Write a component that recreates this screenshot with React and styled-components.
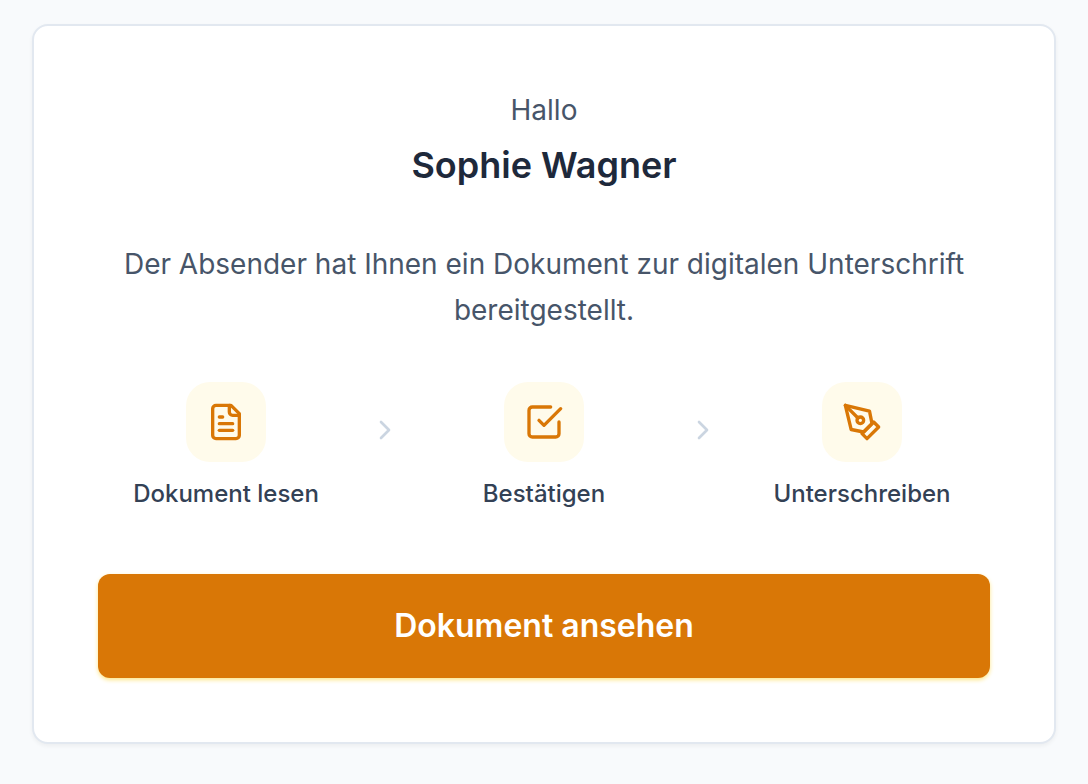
import React from "react";
import styled, { createGlobalStyle } from "styled-components";

const GlobalStyle = createGlobalStyle`
  * {
    box-sizing: border-box;
  }

  body {
    margin: 0;
    background: #f8fafc;
    font-family: Inter, "Liberation Sans", sans-serif;
  }
`;

const Page = styled.main`
  padding: 24px 32px 40px;
`;

const Card = styled.section`
  padding: 64px;
  background: #ffffff;
  border: 2px solid #e2e8f0;
  border-radius: 16px;
  box-shadow: 0 2px 4px rgba(0, 0, 0, 0.05);
  text-align: center;
`;

const Greeting = styled.p`
  margin: 0 0 8px;
  color: #475569;
  font-size: 28px;
  line-height: 40px;
`;

const Name = styled.h1`
  margin: 0 0 49px;
  color: #1e293b;
  font-size: 36px;
  font-weight: 600;
  line-height: 54px;
`;

const Message = styled.p`
  margin: 0 0 49px;
  color: #475569;
  font-size: 28px;
  line-height: 46px;
`;

const Steps = styled.div`
  display: flex;
  align-items: flex-start;
  margin-bottom: 64px;
`;

const Step = styled.div`
  flex: 1;
  display: flex;
  flex-direction: column;
  align-items: center;
  gap: 16px;
`;

const IconBox = styled.div`
  display: flex;
  align-items: center;
  justify-content: center;
  width: 80px;
  height: 80px;
  color: #d97706;
  background: #fffbeb;
  border-radius: 24px;
`;

const StepLabel = styled.span`
  color: #334155;
  font-size: 24px;
  font-weight: 500;
  line-height: 32px;
`;

const Separator = styled.div`
  display: flex;
  justify-content: center;
  width: 62px;
  padding-top: 32px;
  color: #cbd5e1;
`;

const Icon = styled.svg.attrs({
  viewBox: "0 0 24 24",
  fill: "none",
  stroke: "currentColor",
  strokeWidth: 2,
  strokeLinecap: "round",
  strokeLinejoin: "round",
  "aria-hidden": true,
})`
  display: block;
  width: ${(props) => props.$size}px;
  height: ${(props) => props.$size}px;
`;

const ViewButton = styled.button`
  display: block;
  width: 100%;
  padding: 28px 32px;
  color: #ffffff;
  background: #d97706;
  border: 0;
  border-radius: 12px;
  box-shadow: 0 2px 4px #fde68a;
  font-family: inherit;
  font-size: 32px;
  font-weight: 600;
  line-height: 48px;
  cursor: pointer;

  &:hover {
    background: #b45309;
  }
`;

const FileIcon = () => (
  <Icon $size={40}>
    <path d="M15 2H6a2 2 0 0 0-2 2v16a2 2 0 0 0 2 2h12a2 2 0 0 0 2-2V7Z" />
    <path d="M14 2v4a2 2 0 0 0 2 2h4" />
    <path d="M10 9H8" />
    <path d="M16 13H8" />
    <path d="M16 17H8" />
  </Icon>
);

const CheckIcon = () => (
  <Icon $size={40}>
    <path d="m9 11 3 3L22 4" />
    <path d="M21 12v7a2 2 0 0 1-2 2H5a2 2 0 0 1-2-2V5a2 2 0 0 1 2-2h11" />
  </Icon>
);

const PenIcon = () => (
  <Icon $size={40}>
    <path d="m12 19 7-7 3 3-7 7-3-3z" />
    <path d="m18 13-1.5-7.5L2 2l3.5 14.5L13 18l5-5z" />
    <path d="m2 2 7.586 7.586" />
    <circle cx="11" cy="11" r="2" />
  </Icon>
);

const Chevron = () => (
  <Separator>
    <Icon $size={32}>
      <path d="m9 18 6-6-6-6" />
    </Icon>
  </Separator>
);

const App = () => {
  return (
    <>
      <GlobalStyle />
      <Page>
        <Card>
          <Greeting>Hallo</Greeting>
          <Name>Sophie Wagner</Name>
          <Message>
            Der Absender hat Ihnen ein Dokument zur digitalen Unterschrift
            bereitgestellt.
          </Message>
          <Steps>
            <Step>
              <IconBox>
                <FileIcon />
              </IconBox>
              <StepLabel>Dokument lesen</StepLabel>
            </Step>
            <Chevron />
            <Step>
              <IconBox>
                <CheckIcon />
              </IconBox>
              <StepLabel>Bestätigen</StepLabel>
            </Step>
            <Chevron />
            <Step>
              <IconBox>
                <PenIcon />
              </IconBox>
              <StepLabel>Unterschreiben</StepLabel>
            </Step>
          </Steps>
          <ViewButton type="button">Dokument ansehen</ViewButton>
        </Card>
      </Page>
    </>
  );
};

export default App;
